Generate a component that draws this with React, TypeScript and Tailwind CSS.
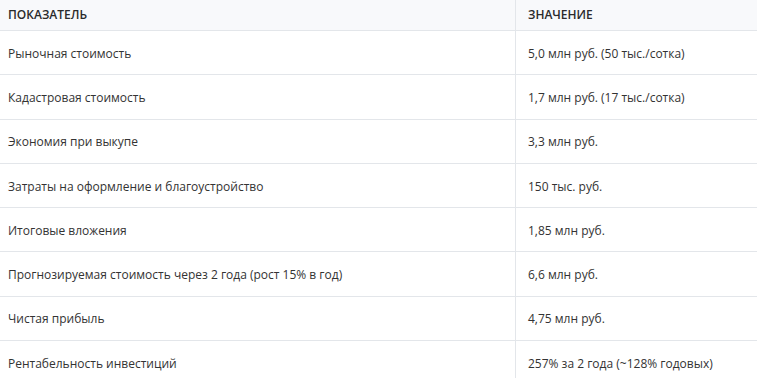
import React from "react";

const rows: [string, string][] = [
  ["Рыночная стоимость", "5,0 млн руб. (50 тыс./сотка)"],
  ["Кадастровая стоимость", "1,7 млн руб. (17 тыс./сотка)"],
  ["Экономия при выкупе", "3,3 млн руб."],
  ["Затраты на оформление и благоустройство", "150 тыс. руб."],
  ["Итоговые вложения", "1,85 млн руб."],
  ["Прогнозируемая стоимость через 2 года (рост 15% в год)", "6,6 млн руб."],
  ["Чистая прибыль", "4,75 млн руб."],
  ["Рентабельность инвестиций", "257% за 2 года (~128% годовых)"],
];

export default function App() {
  return (
    <div
      className="w-[757px] h-[378px] overflow-hidden bg-white text-[#333] text-[12px]"
      style={{ fontFamily: '"Open Sans", "Noto Sans", sans-serif' }}
    >
      <div className="grid grid-cols-[516px_1fr] h-[31px] bg-[#f8f9fb] border-b border-[#e3e6ea] font-semibold uppercase text-[#2b2b2b]">
        <div className="flex items-center pl-2 border-r border-[#e3e6ea]">Показатель</div>
        <div className="flex items-center pl-3">Значение</div>
      </div>
      {rows.map(([a, b], i) => (
        <div
          key={i}
          className="grid grid-cols-[516px_1fr] h-[44.3px] border-b border-[#e3e6ea]"
        >
          <div className="flex items-center pl-2 pt-[2px] border-r border-[#e3e6ea]">{a}</div>
          <div className="flex items-center pl-3 pt-[2px]">{b}</div>
        </div>
      ))}
    </div>
  );
}
